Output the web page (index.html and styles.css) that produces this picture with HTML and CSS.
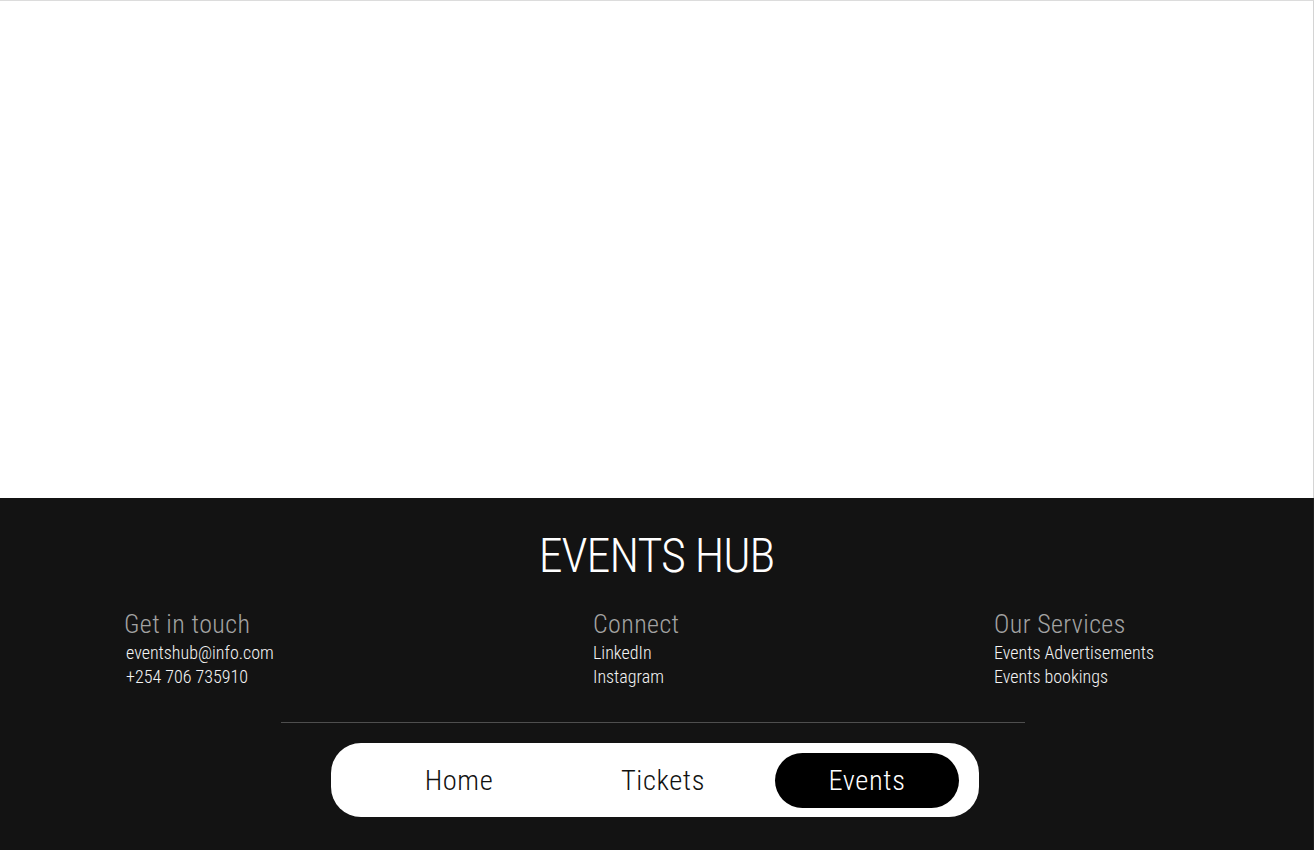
FILE: index.html
```html
<!DOCTYPE html>
<html lang="en">
<head>
<meta charset="utf-8">
<title>Events Hub</title>
<link rel="stylesheet" href="styles.css">
</head>
<body>
<main class="content"></main>
<footer class="footer">
  <h1 class="brand">EVENTS HUB</h1>
  <div class="columns">
    <div class="col">
      <h2 class="col-title">Get in touch</h2>
      <p class="col-text indent">eventshub@info.com</p>
      <p class="col-text indent">+254 706 735910</p>
    </div>
    <div class="col">
      <h2 class="col-title">Connect</h2>
      <p class="col-text">LinkedIn</p>
      <p class="col-text">Instagram</p>
    </div>
    <div class="col">
      <h2 class="col-title">Our Services</h2>
      <p class="col-text">Events Advertisements</p>
      <p class="col-text">Events bookings</p>
    </div>
  </div>
  <hr class="divider">
  <nav class="nav">
    <a class="nav-item">Home</a>
    <a class="nav-item">Tickets</a>
    <a class="nav-item active">Events</a>
  </nav>
</footer>
</body>
</html>
```
FILE: styles.css
```css
html, body {
  margin: 0;
  padding: 0;
  background: #ffffff;
}
body {
  width: 1314px;
  height: 850px;
  overflow: hidden;
  font-family: Roboto, "Liberation Sans", sans-serif;
  font-weight: 300;
  font-stretch: 75%;
}
.content {
  display: block;
  height: 497px;
  border-top: 1px solid #dcdcdc;
  border-right: 1px solid #d4d4d4;
  background: #ffffff;
}
.footer {
  background: #131313;
  height: 352px;
  border-right: 1px solid #1e1e1e;
  padding-top: 30px;
  box-sizing: border-box;
}
.brand {
  margin: 0;
  text-align: center;
  font-weight: 300;
  font-size: 48px;
  line-height: 56px;
  color: #ffffff;
  letter-spacing: -1px;
}
.columns {
  display: grid;
  grid-template-columns: 469px 401px auto;
  padding-left: 124px;
  margin-top: 25px;
}
.col-title {
  margin: 0 0 2px;
  font-weight: 300;
  font-size: 26px;
  line-height: 30px;
  letter-spacing: 0.4px;
  color: #a3a3a3;
}
.col-text {
  margin: 0;
  font-size: 18px;
  line-height: 24px;
  font-weight: 350;
  color: #f4f4f4;
}
.indent {
  padding-left: 2px;
}
.divider {
  width: 744px;
  margin: 33px auto 0 281px;
  border: 0;
  border-top: 1px solid #4e4e4e;
  height: 0;
}
.nav {
  width: 648px;
  height: 74px;
  box-sizing: border-box;
  margin: 20px 0 0 331px;
  background: #ffffff;
  border-radius: 30px;
  display: flex;
  align-items: center;
  gap: 20px;
  padding: 0 20px 0 36px;
}
.nav-item {
  width: 184px;
  height: 55px;
  display: flex;
  align-items: center;
  justify-content: center;
  font-size: 28.5px;
  letter-spacing: 0.6px;
  color: #111111;
  border-radius: 28px;
}
.nav-item.active {
  background: #000000;
  color: #ffffff;
}
```
